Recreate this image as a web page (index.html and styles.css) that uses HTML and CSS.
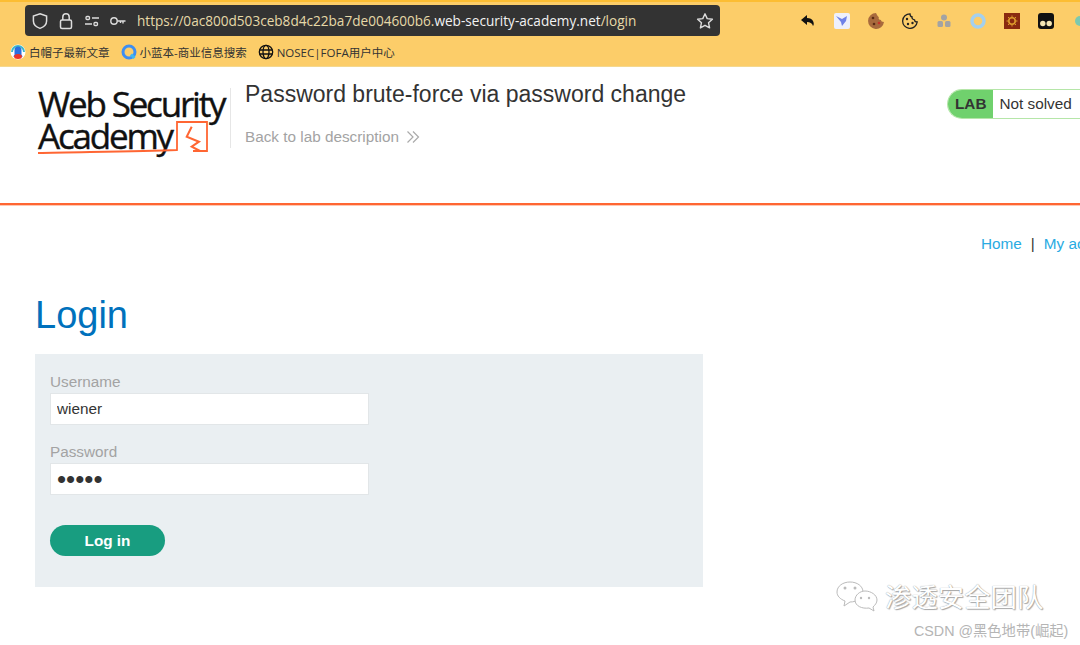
FILE: index.html
```html
<!DOCTYPE html>
<html lang="en">
<head>
  <meta charset="UTF-8" />
  <title>Login</title>
  <link rel="stylesheet" href="styles.css">
</head>
<body>
  <div class="browser">
    <div class="url-row">
      <div class="url-bar">
        <svg class="ub-icon" width="18" height="18" viewBox="0 0 18 18"><path d="M9 1.800 15.600 4v5c0 3.600-2.800 6-6.600 7.400C5.200 15 2.400 12.600 2.400 9V4z" fill="none" stroke="#ddd" stroke-width="1.500"/></svg>
        <svg class="ub-icon" width="18" height="18" viewBox="0 0 18 18"><rect x="3.500" y="8" width="11" height="8.500" rx="1.500" fill="none" stroke="#ddd" stroke-width="1.500"/><path d="M5.800 8V5a3.200 3.200 0 0 1 6.400 0v3" fill="none" stroke="#ddd" stroke-width="1.500"/></svg>
        <svg class="ub-icon" width="18" height="18" viewBox="0 0 18 18"><g fill="none" stroke="#ddd" stroke-width="1.300"><path d="M9 6h7M2 12h7"/><rect x="3" y="4.500" width="3.500" height="3" rx="1"/><rect x="11" y="10.500" width="3.500" height="3" rx="1"/></g></svg>
        <svg class="ub-icon" width="18" height="18" viewBox="0 0 18 18"><circle cx="5" cy="9" r="3.200" fill="none" stroke="#ddd" stroke-width="1.400"/><path d="M8.200 9H16.500M14 9v2.500M11.500 9v2" fill="none" stroke="#ddd" stroke-width="1.400"/></svg>
        <span class="url"><span class="url-dim">https://0ac800d503ceb8d4c22ba7de004600b6.</span>web-security-academy.net<span class="url-dim">/login</span></span>
        <svg class="star" width="18" height="18" viewBox="0 0 18 18"><path d="M9 1.800 11.200 6.600 16.400 7.200 12.500 10.700 13.600 15.900 9 13.300 4.400 15.900 5.500 10.700 1.600 7.200 6.800 6.600z" fill="none" stroke="#ddd" stroke-width="1.400" stroke-linejoin="round"/></svg>
      </div>
      <div class="ext-icons">
        <svg width="16" height="16" viewBox="0 0 16 16"><path d="M7 2 1 7l6 5V9c3 0 5 1 6 4 1-1 1-3 0-5-1-2-3-3-6-3z" fill="#111"/></svg>
        <svg width="16" height="16" viewBox="0 0 16 16"><rect width="16" height="16" rx="2" fill="#eef0fb"/><path d="M2 3l6 3 5-3-1 5-4 5-1-4z" fill="#6f82e8"/></svg>
        <svg width="16" height="16" viewBox="0 0 16 16"><path d="M8 0a8 8 0 1 0 8 9c-2 0-3-1-3-2-2 0-3-2-2-3-1 0-2-2-3-4z" fill="#a86a3d"/><circle cx="5" cy="5" r="1.300" fill="#5c2c14"/><circle cx="6" cy="11" r="1.300" fill="#5c2c14"/><circle cx="11" cy="10" r="1.300" fill="#c8332a"/></svg>
        <svg width="16" height="16" viewBox="0 0 16 16"><path d="M8 .8a7.300 7.300 0 1 0 7.200 8.200c-1.500 0-2.700-1-2.700-2.200-1.600 0-2.800-1.400-2.400-2.800C8.900 3.800 8 2.400 8 .8z" fill="none" stroke="#222" stroke-width="1.300"/><circle cx="5" cy="6" r="1.200" fill="#222"/><circle cx="6" cy="11" r="1.200" fill="#222"/><circle cx="10.500" cy="10" r="1.200" fill="#222"/></svg>
        <svg width="16" height="16" viewBox="0 0 16 16"><g fill="#a3a3a3"><circle cx="8" cy="4.500" r="3"/><rect x="1.500" y="8" width="5.500" height="6" rx="1.500"/><rect x="9" y="8" width="5.500" height="6" rx="1.500"/></g></svg>
        <svg width="16" height="16" viewBox="0 0 16 16"><circle cx="8" cy="8" r="6" fill="none" stroke="#a4d0ee" stroke-width="3.500"/></svg>
        <svg width="16" height="16" viewBox="0 0 16 16"><rect width="16" height="16" fill="#8a2a10"/><circle cx="8" cy="8" r="3.200" fill="none" stroke="#dc9a2c" stroke-width="1.600"/><path d="M8 2.500v2M8 11.500v2M2.500 8h2M11.500 8h2M4 4l1.500 1.500M12 4l-1.500 1.500M4 12l1.500-1.500M12 12l-1.500-1.500" stroke="#dc9a2c"/></svg>
        <svg width="16" height="16" viewBox="0 0 16 16"><rect width="16" height="16" rx="3" fill="#111"/><circle cx="4.800" cy="10.500" r="2.700" fill="#f6e7b4"/><circle cx="11.200" cy="10.500" r="2.700" fill="#f6e7b4"/></svg>
        <span class="ext-last"></span>
      </div>
    </div>
    <div class="bookmarks">
      <span class="bookmark">
        <svg width="16" height="16" viewBox="0 0 16 16"><circle cx="8" cy="8" r="7.500" fill="#fff"/><path d="M8 1a7 7 0 0 1 7 7h-2a5 5 0 0 0-10 0H1a7 7 0 0 1 7-7z" fill="#3fb8c9"/><path d="M4.500 6a3.500 3.500 0 0 1 7 0v5l1.500 1.500H3L4.500 11z" fill="#2a6fe0"/><ellipse cx="8" cy="12.500" rx="4" ry="2.500" fill="#e8352a"/></svg>
        白帽子最新文章
      </span>
      <span class="bookmark">
        <svg width="16" height="16" viewBox="0 0 16 16"><circle cx="8" cy="8" r="6" fill="none" stroke="#3d8ef2" stroke-width="3"/><path d="M10 10.500l3.500 3.500" stroke="#3fb8f0" stroke-width="3"/></svg>
        小蓝本-商业信息搜索
      </span>
      <span class="bookmark">
        <svg width="16" height="16" viewBox="0 0 16 16"><g fill="none" stroke="#111" stroke-width="1.300"><circle cx="8" cy="8" r="6.700"/><ellipse cx="8" cy="8" rx="3" ry="6.700"/><path d="M1.500 6h13M1.500 10h13"/></g></svg>
        NOSEC|FOFA用户中心
      </span>
    </div>
  </div>

  <div class="page">
    <header class="lab-header">
      <div class="logo">
        <div class="logo-line">Web Security</div>
        <div class="logo-line">Academy</div>
        <svg class="logo-mark" width="190" height="70" viewBox="0 0 190 70"><path d="M0 65C40 64 100 63.500 139 62V34H169V63H155" fill="none" stroke="#ff6633" stroke-width="1.800"/><path d="M153.700 38.700 148.700 48.700 161 53.700 153.700 58.700 162 63" fill="none" stroke="#ff6633" stroke-width="2"/></svg>
      </div>
      <div class="lab-title">
        <h2>Password brute-force via password change</h2>
        <a class="back-link">Back to lab description
          <svg width="14" height="14" viewBox="0 0 14 14"><path d="M1.500 1.500 7 7l-5.500 5.500M7 1.500 12.500 7 7 12.500" fill="none" stroke="#aaa" stroke-width="1.200"/></svg>
        </a>
      </div>
      <div class="lab-status"><span class="lab-tag">LAB</span><span class="lab-state">Not solved</span></div>
    </header>

    <section class="content">
      <nav class="top-links"><a>Home</a><span class="pipe">|</span><a>My account</a></nav>
      <h1>Login</h1>
      <form class="login-form">
        <label>Username</label>
        <input type="text" value="wiener">
        <label>Password</label>
        <input class="pass" type="password" value="peter">
        <button type="button">Log in</button>
      </form>
    </section>
  </div>

  <div class="watermark">
    <div class="wm-title">
      <svg width="44" height="32" viewBox="0 0 44 32"><g fill="#fff" stroke="#bbb" stroke-width="1"><path d="M14 2c7 0 13 4 13 10s-6 10-13 10l-6 4 1-5C4 19 1 16 1 12 1 6 7 2 14 2z"/><path d="M29 11c6 0 12 4 12 9 0 3-2 5-4 7l1 4-5-3c-7 1-14-2-14-8 0-5 5-9 10-9z"/></g><g fill="#bbb"><circle cx="9" cy="8" r="1.500"/><circle cx="19" cy="8" r="1.500"/><circle cx="25" cy="18" r="1.200"/><circle cx="33" cy="18" r="1.200"/></g></svg>
      <span>渗透安全团队</span>
    </div>
    <div class="wm-credit">CSDN @黑色地带(崛起)</div>
  </div>
</body>
</html>
```

FILE: styles.css
```css
html, body {
  margin: 0;
  height: 645px;
  overflow: hidden;
}
body {
  font-family: "Liberation Sans", Arial, sans-serif;
  background-color: white;
  color: #333;
  width: 1080px;
  position: relative;
}

/* browser toolbar */
.browser {
  height: 67px;
  box-sizing: border-box;
  background-color: #fccd69;
  border-top: 2px solid #fcbd33;
  border-bottom: 1px solid #f4d88f;
  font-family: "Open Sans", "Noto Sans CJK SC", sans-serif;
}
.url-row {
  display: flex;
  align-items: center;
  padding: 3px 0 0 25px;
}
.url-bar {
  flex: none;
  width: 695px;
  height: 31px;
  box-sizing: border-box;
  background-color: #333;
  border-radius: 4px;
  display: flex;
  align-items: center;
  padding: 0 6px;
  gap: 8px;
}
.url {
  font-size: 13.6px;
  color: #f2f2f2;
  margin-left: 2px;
  white-space: nowrap;
  flex: 1;
}
.url-dim {
  color: #e6d9a8;
}
.ext-icons {
  display: flex;
  flex: none;
  align-items: center;
  gap: 18px;
  margin-left: 80px;
}
.ext-last {
  width: 16px;
  height: 10px;
  margin-left: 3px;
  background-color: #7cc9b0;
  border-radius: 5px;
}
.bookmarks {
  display: flex;
  align-items: center;
  gap: 11px;
  padding: 8px 0 0 10px;
  font-size: 11.500px;
  color: #333;
}
.bookmark {
  display: flex;
  align-items: center;
  gap: 3px;
  white-space: nowrap;
}

/* lab header */
.lab-header {
  height: 138px;
  box-sizing: border-box;
  border-bottom: 2px solid #ff6633;
  box-shadow: 0 1px 0 #ffc9b3;
  display: flex;
  align-items: flex-start;
  padding: 21px 0 0 38px;
}
.logo {
  flex: none;
  width: 192px;
  height: 60px;
  position: relative;
  font-family: "Open Sans", sans-serif;
  font-size: 35px;
  font-weight: 400;
  line-height: 33px;
  letter-spacing: -2.200px;
  -webkit-text-stroke: 0.4px #111;
  color: #111;
  white-space: nowrap;
  border-right: 1px solid #e6e6e6;
}
.logo-line {
  margin-top: -1px;
}
.logo-mark {
  position: absolute;
  left: 0;
  top: 0;
}
.lab-title {
  width: 716px;
  padding-left: 14px;
  box-sizing: border-box;
  margin-top: -8px;
  flex: none;
}
.lab-title h2 {
  margin: 0;
  font-size: 23px;
  font-weight: normal;
  line-height: 28px;
  color: #333;
}
.back-link {
  display: flex;
  align-items: center;
  gap: 7px;
  margin-top: 19px;
  font-size: 15.300px;
  line-height: 20px;
  color: #a3a3a3;
}
.lab-status {
  display: flex;
  flex: none;
  height: 30px;
  width: 160px;
  margin-top: 1px;
  box-sizing: border-box;
  border: 1px solid #b5e6a8;
  border-right: none;
  border-radius: 15px 0 0 15px;
  overflow: hidden;
  font-size: 15.300px;
  line-height: 28px;
}
.lab-tag {
  background-color: #70d16d;
  color: #333;
  font-weight: bold;
  padding: 0 7px 0 7px;
}
.lab-state {
  padding-left: 6px;
  color: #333;
}

/* login page */
.content {
  padding: 29px 0 0 35px;
}
.top-links {
  display: flex;
  gap: 9px;
  padding-left: 946px;
  font-size: 15.300px;
  line-height: 20px;
  color: #333;
  white-space: nowrap;
}
.top-links a {
  color: #29abe2;
}
h1 {
  margin: 39px 0 17px;
  font-size: 38px;
  line-height: 44px;
  font-weight: normal;
  color: #0071bc;
}
.login-form {
  width: 668px;
  height: 233px;
  box-sizing: border-box;
  background-color: #eaeff2;
  padding: 18px 15px 0;
}
label {
  display: block;
  font-size: 15.300px;
  line-height: 19px;
  color: #a3a3a3;
}
input {
  display: block;
  width: 319px;
  height: 32px;
  box-sizing: border-box;
  margin: 2px 0 17px;
  padding: 0 6px;
  border: 1px solid #e2e6e8;
  background-color: white;
  font-family: "Liberation Sans", Arial, sans-serif;
  font-size: 15.300px;
  color: #333;
  outline: none;
}
.pass {
  font-size: 26px;
}
button {
  display: block;
  width: 115px;
  height: 31px;
  margin-top: 30px;
  border: none;
  border-radius: 16px;
  background-color: #189d80;
  color: white;
  font-family: "Liberation Sans", Arial, sans-serif;
  font-size: 15.300px;
  font-weight: bold;
}

/* watermark over the page */
.watermark {
  position: absolute;
  left: 836px;
  top: 578px;
  width: 244px;
}
.wm-title {
  display: flex;
  align-items: center;
  gap: 5px;
  font-family: "Noto Sans CJK SC", sans-serif;
  font-size: 26.400px;
  line-height: 36px;
  color: #fff;
  text-shadow: 0 0 1px #888, 1px 1px 1px #aaa;
}
.wm-credit {
  margin: 7px 0 0 78px;
  font-family: "Liberation Sans", "Noto Sans CJK SC", sans-serif;
  font-size: 14.300px;
  line-height: 20px;
  color: #b5b5b5;
  white-space: nowrap;
}
```
